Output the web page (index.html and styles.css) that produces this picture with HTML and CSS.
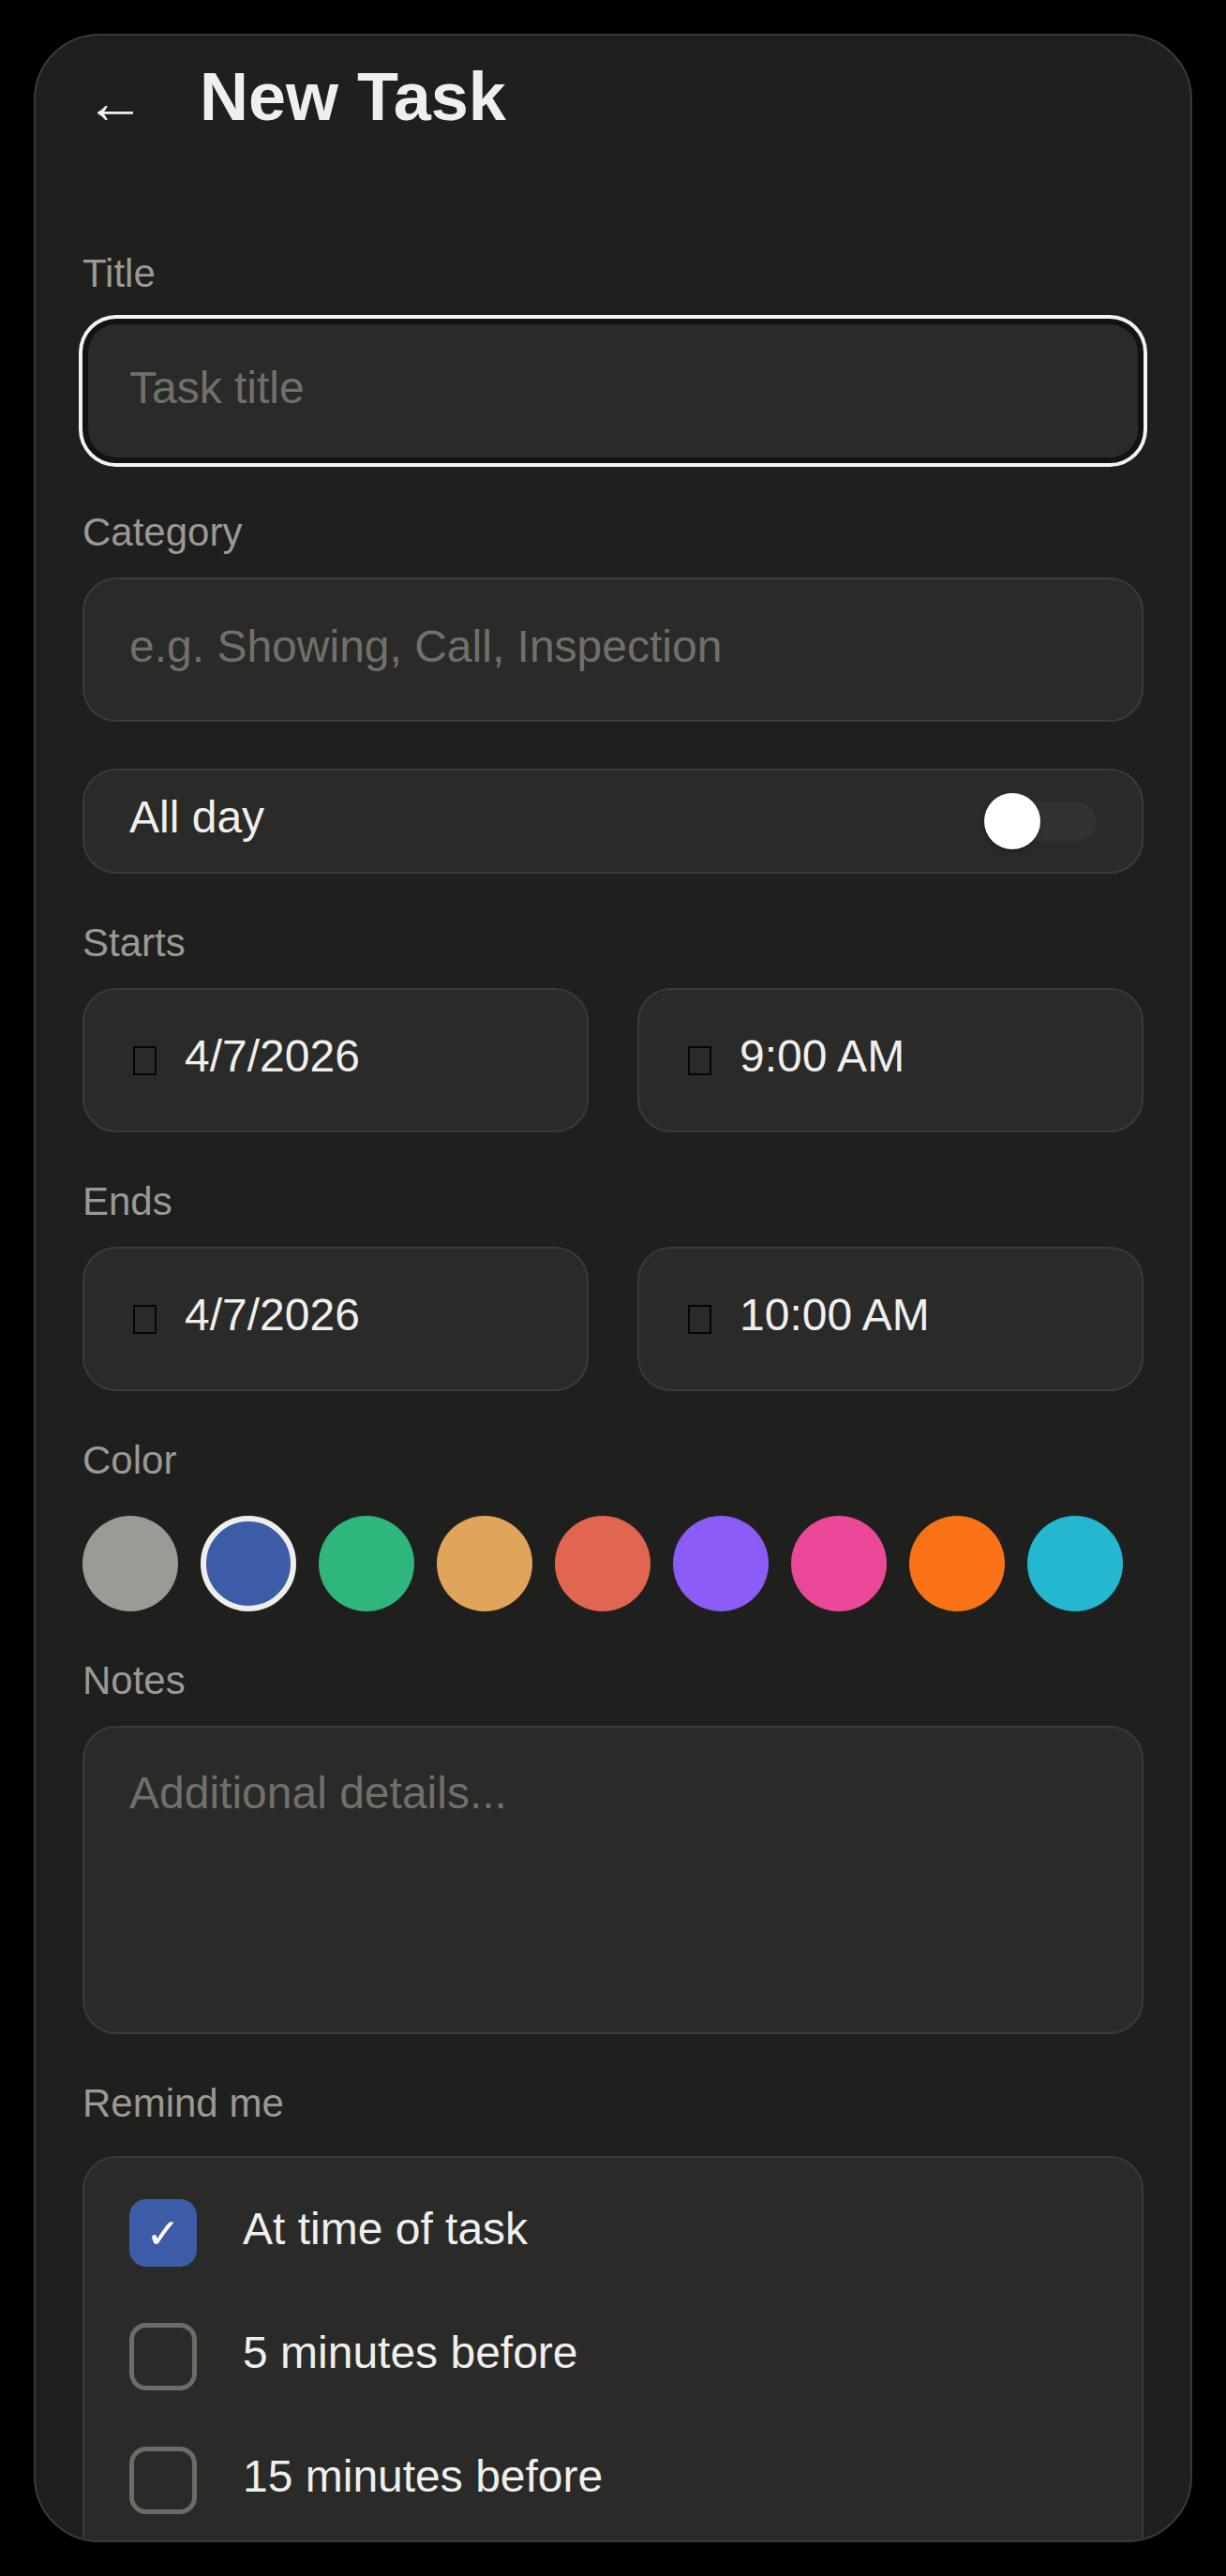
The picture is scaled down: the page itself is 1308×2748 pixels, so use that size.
FILE: index.html
```html
<!DOCTYPE html>
<html lang="en">
<head>
<meta charset="utf-8">
<title>New Task</title>
<link rel="stylesheet" href="styles.css">
</head>
<body>
<div class="phone">
  <header class="topbar">
    <button class="back" type="button" aria-label="Back">←</button>
    <h1 class="page-title">New Task</h1>
  </header>

  <form class="form">
    <div class="field">
      <label class="label" for="task-title">Title</label>
      <input id="task-title" class="input is-focused" type="text" placeholder="Task title">
    </div>

    <div class="field">
      <label class="label" for="task-category">Category</label>
      <input id="task-category" class="input" type="text" placeholder="e.g. Showing, Call, Inspection">
    </div>

    <div class="allday">
      <span class="row-text">All day</span>
      <span class="switch"><span class="switch-knob"></span></span>
    </div>

    <div class="field">
      <span class="label">Starts</span>
      <div class="pair">
        <div class="picker"><span class="tofu"></span><span class="row-text">4/7/2026</span></div>
        <div class="picker"><span class="tofu"></span><span class="row-text">9:00 AM</span></div>
      </div>
    </div>

    <div class="field">
      <span class="label">Ends</span>
      <div class="pair">
        <div class="picker"><span class="tofu"></span><span class="row-text">4/7/2026</span></div>
        <div class="picker"><span class="tofu"></span><span class="row-text">10:00 AM</span></div>
      </div>
    </div>

    <div class="field">
      <span class="label label-wide">Color</span>
      <div class="swatches">
        <span class="swatch swatch-gray"></span>
        <span class="swatch swatch-blue is-selected"></span>
        <span class="swatch swatch-green"></span>
        <span class="swatch swatch-sand"></span>
        <span class="swatch swatch-coral"></span>
        <span class="swatch swatch-purple"></span>
        <span class="swatch swatch-pink"></span>
        <span class="swatch swatch-orange"></span>
        <span class="swatch swatch-cyan"></span>
      </div>
    </div>

    <div class="field">
      <label class="label" for="task-notes">Notes</label>
      <textarea id="task-notes" class="notes" placeholder="Additional details..."></textarea>
    </div>

    <div class="field">
      <span class="label label-remind">Remind me</span>
      <div class="remind-card">
        <div class="remind-row"><span class="check is-checked">✓</span><span class="row-text">At time of task</span></div>
        <div class="remind-row"><span class="check"></span><span class="row-text">5 minutes before</span></div>
        <div class="remind-row"><span class="check"></span><span class="row-text">15 minutes before</span></div>
      </div>
    </div>
  </form>
</div>
</body>
</html>
```

FILE: styles.css
```css
* {
  box-sizing: border-box;
}

html,
body {
  margin: 0;
  background: #000;
}

body {
  padding: 36px;
  font-family: "Liberation Sans", Arial, sans-serif;
  color: #efefed;
}

.phone {
  height: 2676px;
  border: 2px solid #3a3a38;
  border-radius: 70px;
  background: #1f1f1d;
  overflow: hidden;
  padding: 25px 50px 0;
}

/* header */
.topbar {
  display: flex;
  align-items: flex-start;
}

.back {
  margin: 14px 0 0 3px;
  padding: 0;
  border: 0;
  background: none;
  color: #efefed;
  font-family: "Liberation Sans", Arial, sans-serif;
  font-size: 64px;
  line-height: 64px;
}

.page-title {
  margin: 0 0 0 58px;
  font-size: 72px;
  line-height: 80px;
  font-weight: 700;
  color: #efefed;
}

/* form */
.form {
  margin-top: 125px;
  display: flex;
  flex-direction: column;
  gap: 50px;
}

.field {
  display: flex;
  flex-direction: column;
}

.label {
  display: block;
  margin-bottom: 24px;
  font-size: 42px;
  line-height: 48px;
  color: #9a9a95;
}

.label-wide {
  margin-bottom: 35px;
}

.label-remind {
  margin-bottom: 32px;
}

.input {
  width: 100%;
  height: 154px;
  padding: 0 48px 7px;
  border: 2px solid #3a3a38;
  border-radius: 36px;
  background: #2a2a28;
  color: #efefed;
  font-family: "Liberation Sans", Arial, sans-serif;
  font-size: 48px;
  outline: none;
}

.input::placeholder,
.notes::placeholder {
  color: #70706b;
}

.input.is-focused {
  border-color: #121212;
  box-shadow: 0 0 0 4px #f3f3f1, inset 0 0 0 4px #121212;
}

.row-text {
  padding-bottom: 8px;
  font-size: 48px;
  line-height: 56px;
  color: #efefed;
}

/* all day */
.allday {
  height: 112px;
  padding: 0 48px;
  border: 2px solid #3a3a38;
  border-radius: 36px;
  background: #2a2a28;
  display: flex;
  align-items: center;
  justify-content: space-between;
}

.switch {
  position: relative;
  width: 120px;
  height: 42px;
  border-radius: 21px;
  background: #323230;
}

.switch-knob {
  position: absolute;
  left: 0;
  top: -9px;
  width: 60px;
  height: 60px;
  border-radius: 50%;
  background: #fff;
  box-shadow: 0 2px 4px rgba(0, 0, 0, 0.35);
}

/* date / time pickers */
.pair {
  display: grid;
  grid-template-columns: 1fr 1fr;
  gap: 52px;
}

.picker {
  height: 154px;
  padding: 0 48px;
  border: 2px solid #3a3a38;
  border-radius: 36px;
  background: #2a2a28;
  display: flex;
  align-items: center;
}

.tofu {
  flex: none;
  width: 25px;
  height: 31px;
  margin: 0 30px 0 4px;
  border: 2px solid #050505;
}

/* colors */
.swatches {
  display: flex;
  gap: 24px;
}

.swatch {
  flex: none;
  width: 102px;
  height: 102px;
  border-radius: 50%;
}

.swatch.is-selected {
  border: 6px solid #eeeeec;
}

.swatch-gray { background: #9b9b95; }
.swatch-blue { background: #3d5ca8; }
.swatch-green { background: #2fb67c; }
.swatch-sand { background: #e0a55b; }
.swatch-coral { background: #e06651; }
.swatch-purple { background: #8b5cf6; }
.swatch-pink { background: #ec4899; }
.swatch-orange { background: #f97316; }
.swatch-cyan { background: #23b8d0; }

/* notes */
.notes {
  display: block;
  width: 100%;
  height: 329px;
  padding: 42px 48px;
  border: 2px solid #3a3a38;
  border-radius: 36px;
  background: #2a2a28;
  color: #efefed;
  font-family: "Liberation Sans", Arial, sans-serif;
  font-size: 48px;
  line-height: 56px;
  resize: none;
  outline: none;
}

/* reminders */
.remind-card {
  padding: 14px 48px 40px;
  border: 2px solid #3a3a38;
  border-radius: 36px;
  background: #2a2a28;
}

.remind-row {
  display: flex;
  align-items: center;
  gap: 49px;
  padding: 30px 0;
}

.check {
  flex: none;
  width: 72px;
  height: 72px;
  border: 5px solid #6c6c67;
  border-radius: 18px;
  display: flex;
  align-items: center;
  justify-content: center;
}

.check.is-checked {
  border: 0;
  background: #3d5ca8;
  color: #fff;
  font-family: "DejaVu Sans", sans-serif;
  font-weight: 700;
  font-size: 44px;
}
```
